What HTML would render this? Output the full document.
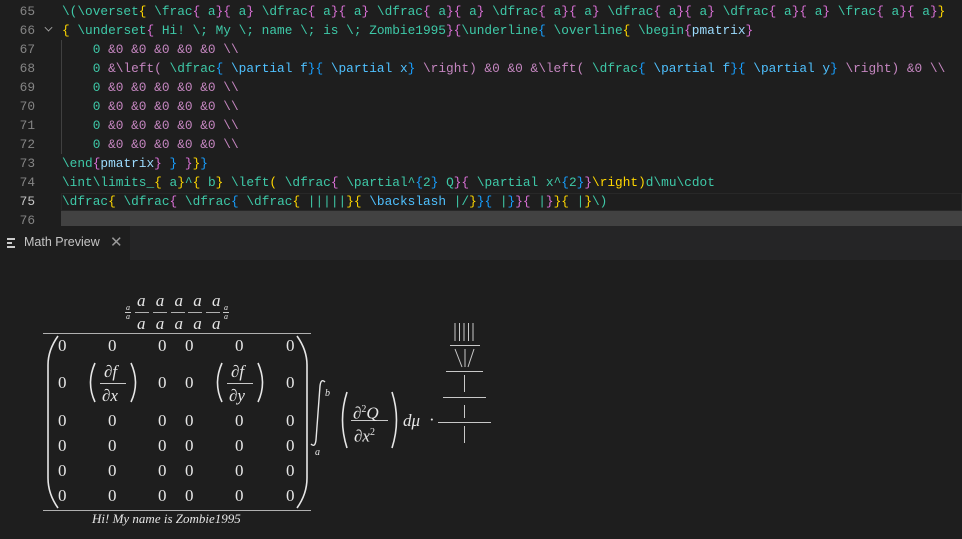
<!DOCTYPE html>
<html><head><meta charset="utf-8"><style>
*{margin:0;padding:0;box-sizing:border-box}
body{width:962px;height:539px;background:#1e1e1e;overflow:hidden;position:relative;font-family:"Liberation Sans",sans-serif}
.ed{position:absolute;left:0;top:0;width:962px;height:226px;background:#1e1e1e}
.ln{position:absolute;left:0;width:35px;text-align:right;font:12.8px/19px "Liberation Mono",monospace;color:#858585}
.cl{position:absolute;left:62px;font:12.8px/19px "Liberation Mono",monospace;color:#3ec9a8;white-space:pre}
.y{color:#ffd700}.p{color:#da70d6}.b{color:#179fff}.m{color:#c586c0}.l{color:#9cdcfe}.k{color:#4fc1ff}
.pn{position:absolute;left:0;top:226px;width:962px;height:34px;background:#252526}
.tab{position:absolute;left:0;top:226px;width:130px;height:34px;background:#1e1e1e}
.math{position:absolute;color:#e6e6e6;font-family:"Liberation Serif",serif;white-space:nowrap}
.i{font-style:italic}
.hr{position:absolute;background:#b0b0b0;height:1px}
</style></head><body>
<div class="ed"></div>
<div class="ln" style="top:2px">65</div><div class="ln" style="top:21px">66</div><div class="ln" style="top:40px">67</div><div class="ln" style="top:59px">68</div><div class="ln" style="top:78px">69</div><div class="ln" style="top:97px">70</div><div class="ln" style="top:116px">71</div><div class="ln" style="top:135px">72</div><div class="ln" style="top:154px">73</div><div class="ln" style="top:173px">74</div><div class="ln" style="top:192px;color:#c6c6c6">75</div><div class="ln" style="top:211px">76</div>
<div style="position:absolute;left:45px;top:24px;width:7px;height:7px;border-right:1.3px solid #aaa;border-bottom:1.3px solid #aaa;transform:rotate(45deg) scale(.8)"></div>
<div style="position:absolute;left:61px;top:40px;width:1px;height:114px;background:#404040"></div>
<div style="position:absolute;left:61px;top:193px;width:901px;height:18px;border:1px solid #282828;background:#1e1e1e"></div>
<div style="position:absolute;left:61px;top:211px;width:901px;height:15px;background:#424242"></div>
<div class="cl" style="top:2px">\(\overset<span class="y">{</span> \frac<span class="p">{</span> a<span class="p">}{</span> a<span class="p">}</span> \dfrac<span class="p">{</span> a<span class="p">}{</span> a<span class="p">}</span> \dfrac<span class="p">{</span> a<span class="p">}{</span> a<span class="p">}</span> \dfrac<span class="p">{</span> a<span class="p">}{</span> a<span class="p">}</span> \dfrac<span class="p">{</span> a<span class="p">}{</span> a<span class="p">}</span> \dfrac<span class="p">{</span> a<span class="p">}{</span> a<span class="p">}</span> \frac<span class="p">{</span> a<span class="p">}{</span> a<span class="p">}</span><span class="y">}</span></div>
<div class="cl" style="top:21px;left:62px"><span class="y">{</span> \underset<span class="p">{</span> Hi! \; My \; name \; is \; Zombie1995<span class="p">}{</span>\underline<span class="b">{</span> \overline<span class="y">{</span> \begin<span class="p">{</span><span class="l">pmatrix</span><span class="p">}</span></div>
<div class="cl" style="top:40px">    0 <span class="m">&amp;0 &amp;0 &amp;0 &amp;0 &amp;0 \\</span></div>
<div class="cl" style="top:59px">    0 <span class="m">&amp;\left(</span> \dfrac<span class="b">{</span> <span class="k">\partial f</span><span class="b">}{</span> <span class="k">\partial x</span><span class="b">}</span> <span class="m">\right) &amp;0 &amp;0 &amp;\left(</span> \dfrac<span class="b">{</span> <span class="k">\partial f</span><span class="b">}{</span> <span class="k">\partial y</span><span class="b">}</span> <span class="m">\right) &amp;0 \\</span></div>
<div class="cl" style="top:78px">    0 <span class="m">&amp;0 &amp;0 &amp;0 &amp;0 &amp;0 \\</span></div>
<div class="cl" style="top:97px">    0 <span class="m">&amp;0 &amp;0 &amp;0 &amp;0 &amp;0 \\</span></div>
<div class="cl" style="top:116px">    0 <span class="m">&amp;0 &amp;0 &amp;0 &amp;0 &amp;0 \\</span></div>
<div class="cl" style="top:135px">    0 <span class="m">&amp;0 &amp;0 &amp;0 &amp;0 &amp;0 \\</span></div>
<div class="cl" style="top:154px">\end<span class="p">{</span><span class="l">pmatrix</span><span class="p">}</span> <span class="b">}</span> <span class="p">}</span><span class="y">}</span><span class="b">}</span></div>
<div class="cl" style="top:173px">\int\limits_<span class="y">{</span> a<span class="y">}</span>^<span class="y">{</span> b<span class="y">}</span> \left<span class="y">(</span> \dfrac<span class="p">{</span> \partial^<span class="b">{</span>2<span class="b">}</span> Q<span class="p">}{</span> \partial x^<span class="b">{</span>2<span class="b">}</span><span class="p">}</span><span class="y">\right)</span>d\mu\cdot</div>
<div class="cl" style="top:192px">\dfrac<span class="y">{</span> \dfrac<span class="p">{</span> \dfrac<span class="b">{</span> \dfrac<span class="y">{</span> |||||<span class="y">}{</span> <span class="k">\backslash</span> |/<span class="y">}</span><span class="b">}{</span> |<span class="b">}</span><span class="p">}{</span> |<span class="p">}</span><span class="y">}{</span> |<span class="y">}</span>\)</div>
<div class="pn"></div><div class="tab"></div>
<div style="position:absolute;left:7px;top:238px;width:8px;height:10px;border-top:2px solid #ccc;border-bottom:2px solid #ccc"><div style="margin-top:2px;height:2px;width:5px;background:#ccc"></div></div>
<div style="position:absolute;left:24px;top:235px;font-size:12.5px;color:#c5c5c5">Math Preview</div>
<div style="position:absolute;left:110px;top:233px;font-size:15px;color:#999">✕</div>

<!-- overset -->
<div class="math i" style="left:126px;top:303px;font-size:8px;line-height:9px">a<br>a</div>
<div class="hr" style="left:125px;top:312px;width:6px;background:#ccc"></div>
<div class="math i" style="left:224px;top:303px;font-size:8px;line-height:9px">a<br>a</div>
<div class="hr" style="left:223px;top:312px;width:6px;background:#ccc"></div>
<div class="math i" style="left:137px;top:290px;font-size:17px;line-height:21px;word-spacing:6px">a a a a a</div>
<div class="math i" style="left:137px;top:313px;font-size:17px;line-height:21px;word-spacing:6px">a a a a a</div>
<div class="hr" style="left:135px;top:312px;width:14px"></div><div class="hr" style="left:153px;top:312px;width:14px"></div><div class="hr" style="left:171px;top:312px;width:14px"></div><div class="hr" style="left:188px;top:312px;width:14px"></div><div class="hr" style="left:206px;top:312px;width:14px"></div>
<div class="hr" style="left:43px;top:333px;width:268px"></div>
<div class="hr" style="left:43px;top:510px;width:268px"></div>
<svg style="position:absolute;left:0;top:0" width="962" height="539"><g fill="none" stroke="#e6e6e6" stroke-width="1.6">
<path d="M58 336 Q48 350 48 365 L48 478 Q48 494 58 508"/>
<path d="M297 336 Q307 350 307 365 L307 478 Q307 494 297 508"/>
<path d="M95 363 Q86 383 95 402"/><path d="M131 363 Q140 383 131 402"/>
<path d="M222 363 Q213 383 222 402"/><path d="M258 363 Q267 383 258 402"/>
<path d="M347 392 Q338 420 347 448"/><path d="M392 392 Q401 420 392 448"/>
<path d="M325 382 Q321 378 320 386 L316 440 Q315 448 311 444" stroke-width="1.4"/>
</g><g stroke="#c8c8c8" stroke-width="1">
<line x1="100" y1="383.5" x2="126" y2="383.5"/><line x1="227" y1="383.5" x2="253" y2="383.5"/>
<line x1="351" y1="420.5" x2="388" y2="420.5"/>
<line x1="450" y1="345.5" x2="480" y2="345.5"/><line x1="446" y1="371.5" x2="483" y2="371.5"/>
<line x1="443" y1="397.5" x2="486" y2="397.5"/><line x1="438" y1="422.5" x2="491" y2="422.5"/>
<line x1="455" y1="323" x2="455" y2="341"/><line x1="459.5" y1="323" x2="459.5" y2="341"/><line x1="464" y1="323" x2="464" y2="341"/><line x1="468.5" y1="323" x2="468.5" y2="341"/><line x1="473" y1="323" x2="473" y2="341"/>
<line x1="455" y1="349" x2="462" y2="367"/><line x1="465" y1="349" x2="465" y2="367"/><line x1="474" y1="349" x2="468" y2="367"/>
<line x1="464.5" y1="375" x2="464.5" y2="392"/><line x1="464.5" y1="405" x2="464.5" y2="418"/><line x1="464.5" y1="426" x2="464.5" y2="443"/>
</g></svg>
<div class="math" style="left:0;top:0;font-size:17px;line-height:17px">
<div style="position:absolute;left:58px;top:337px">0</div><div style="position:absolute;left:108px;top:337px">0</div><div style="position:absolute;left:158px;top:337px">0</div><div style="position:absolute;left:185px;top:337px">0</div><div style="position:absolute;left:235px;top:337px">0</div><div style="position:absolute;left:286px;top:337px">0</div>
<div style="position:absolute;left:58px;top:374px">0</div><div style="position:absolute;left:158px;top:374px">0</div><div style="position:absolute;left:185px;top:374px">0</div><div style="position:absolute;left:286px;top:374px">0</div>
<div class="i" style="position:absolute;left:104px;top:363px">∂f</div><div class="i" style="position:absolute;left:102px;top:387px">∂x</div>
<div class="i" style="position:absolute;left:231px;top:363px">∂f</div><div class="i" style="position:absolute;left:229px;top:387px">∂y</div>
<div style="position:absolute;left:58px;top:412px">0</div><div style="position:absolute;left:108px;top:412px">0</div><div style="position:absolute;left:158px;top:412px">0</div><div style="position:absolute;left:185px;top:412px">0</div><div style="position:absolute;left:235px;top:412px">0</div><div style="position:absolute;left:286px;top:412px">0</div>
<div style="position:absolute;left:58px;top:437px">0</div><div style="position:absolute;left:108px;top:437px">0</div><div style="position:absolute;left:158px;top:437px">0</div><div style="position:absolute;left:185px;top:437px">0</div><div style="position:absolute;left:235px;top:437px">0</div><div style="position:absolute;left:286px;top:437px">0</div>
<div style="position:absolute;left:58px;top:462px">0</div><div style="position:absolute;left:108px;top:462px">0</div><div style="position:absolute;left:158px;top:462px">0</div><div style="position:absolute;left:185px;top:462px">0</div><div style="position:absolute;left:235px;top:462px">0</div><div style="position:absolute;left:286px;top:462px">0</div>
<div style="position:absolute;left:58px;top:487px">0</div><div style="position:absolute;left:108px;top:487px">0</div><div style="position:absolute;left:158px;top:487px">0</div><div style="position:absolute;left:185px;top:487px">0</div><div style="position:absolute;left:235px;top:487px">0</div><div style="position:absolute;left:286px;top:487px">0</div>
<div class="i" style="position:absolute;left:353px;top:401px">∂<sup style="font-size:10px;font-style:normal">2</sup>Q</div>
<div class="i" style="position:absolute;left:354px;top:424px">∂x<sup style="font-size:10px;font-style:normal">2</sup></div>
<div class="i" style="position:absolute;left:403px;top:412px">dμ</div>
<div style="position:absolute;left:429px;top:411px">·</div>
<div class="i" style="position:absolute;left:325px;top:385px;font-size:10px">b</div>
<div class="i" style="position:absolute;left:315px;top:444px;font-size:10px">a</div>
</div>
<div class="math i" style="left:92px;top:511px;font-size:13px">Hi! My name is Zombie1995</div>
</body></html>
